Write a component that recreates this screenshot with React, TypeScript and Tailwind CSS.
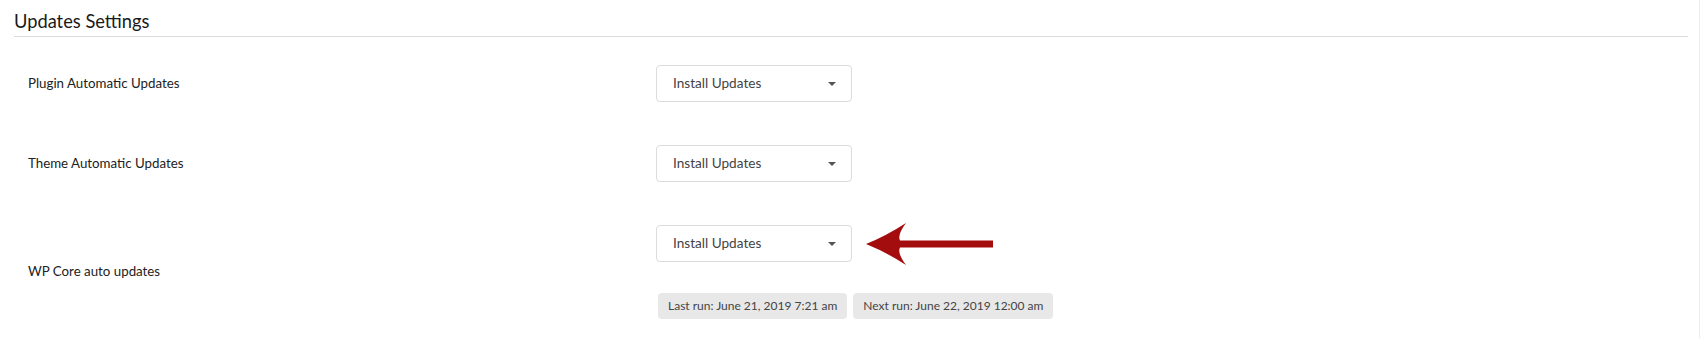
import React from "react";

const font = { fontFamily: "Lato, 'Noto Sans', sans-serif" };

function SelectBox() {
  return (
    <div className="flex h-[37px] w-[196px] items-center justify-between rounded-[4px] border border-[#dcdcdc] bg-white pl-[16px] pr-[15px] text-[13.6px] text-[#444]">
      <span>Install Updates</span>
      <svg width="8" height="4" viewBox="0 0 8 4">
        <path d="M0 0 L8 0 L4 4 Z" fill="#555" />
      </svg>
    </div>
  );
}

// annotation arrow pointing at the core updates select
function Arrow() {
  return (
    <svg width="128" height="42" viewBox="0 0 128 42" className="-my-[3px] ml-[14px]">
      <path
        d="M0 21 Q20 13 40 0 Q31 12 34 17.5 L127 17.5 L127 24.5 L34 24.5 Q31 30 40 42 Q20 29 0 21 Z"
        fill="#a30d0d"
      />
    </svg>
  );
}

function Badge({ children }: { children: React.ReactNode }) {
  return (
    <span className="flex h-[26px] items-center rounded-[4px] bg-[#e8e8e8] px-[10px] text-[12px] text-[#444]">
      {children}
    </span>
  );
}

export default function App() {
  return (
    <div
      className="h-[338px] w-[1700px] border-r border-[#ececec] bg-white"
      style={font}
    >
      <div className="ml-[14px] mr-[11px] border-b border-[#dcdcdc] pt-[10px] pb-[4px] text-[18.3px] leading-[22px] text-[#1a1a1a]">
        Updates Settings
      </div>

      <div className="flex flex-col gap-[43px] pt-[28px]">
        <div className="flex items-center">
          <div className="w-[656px] pl-[28px] text-[13.3px] text-[#222]">
            Plugin Automatic Updates
          </div>
          <SelectBox />
        </div>

        <div className="flex items-center">
          <div className="w-[656px] pl-[28px] text-[13.3px] text-[#222]">
            Theme Automatic Updates
          </div>
          <SelectBox />
        </div>

        <div className="flex items-center">
          <div className="w-[656px] pl-[28px] text-[13.3px] text-[#222]">
            WP Core auto updates
          </div>
          <div className="flex flex-col">
            <div className="flex items-center">
              <SelectBox />
              <Arrow />
            </div>
            <div className="mt-[31px] flex gap-[6px] pl-[2px]">
              <Badge>Last run: June 21, 2019 7:21 am</Badge>
              <Badge>Next run: June 22, 2019 12:00 am</Badge>
            </div>
          </div>
        </div>
      </div>
    </div>
  );
}
